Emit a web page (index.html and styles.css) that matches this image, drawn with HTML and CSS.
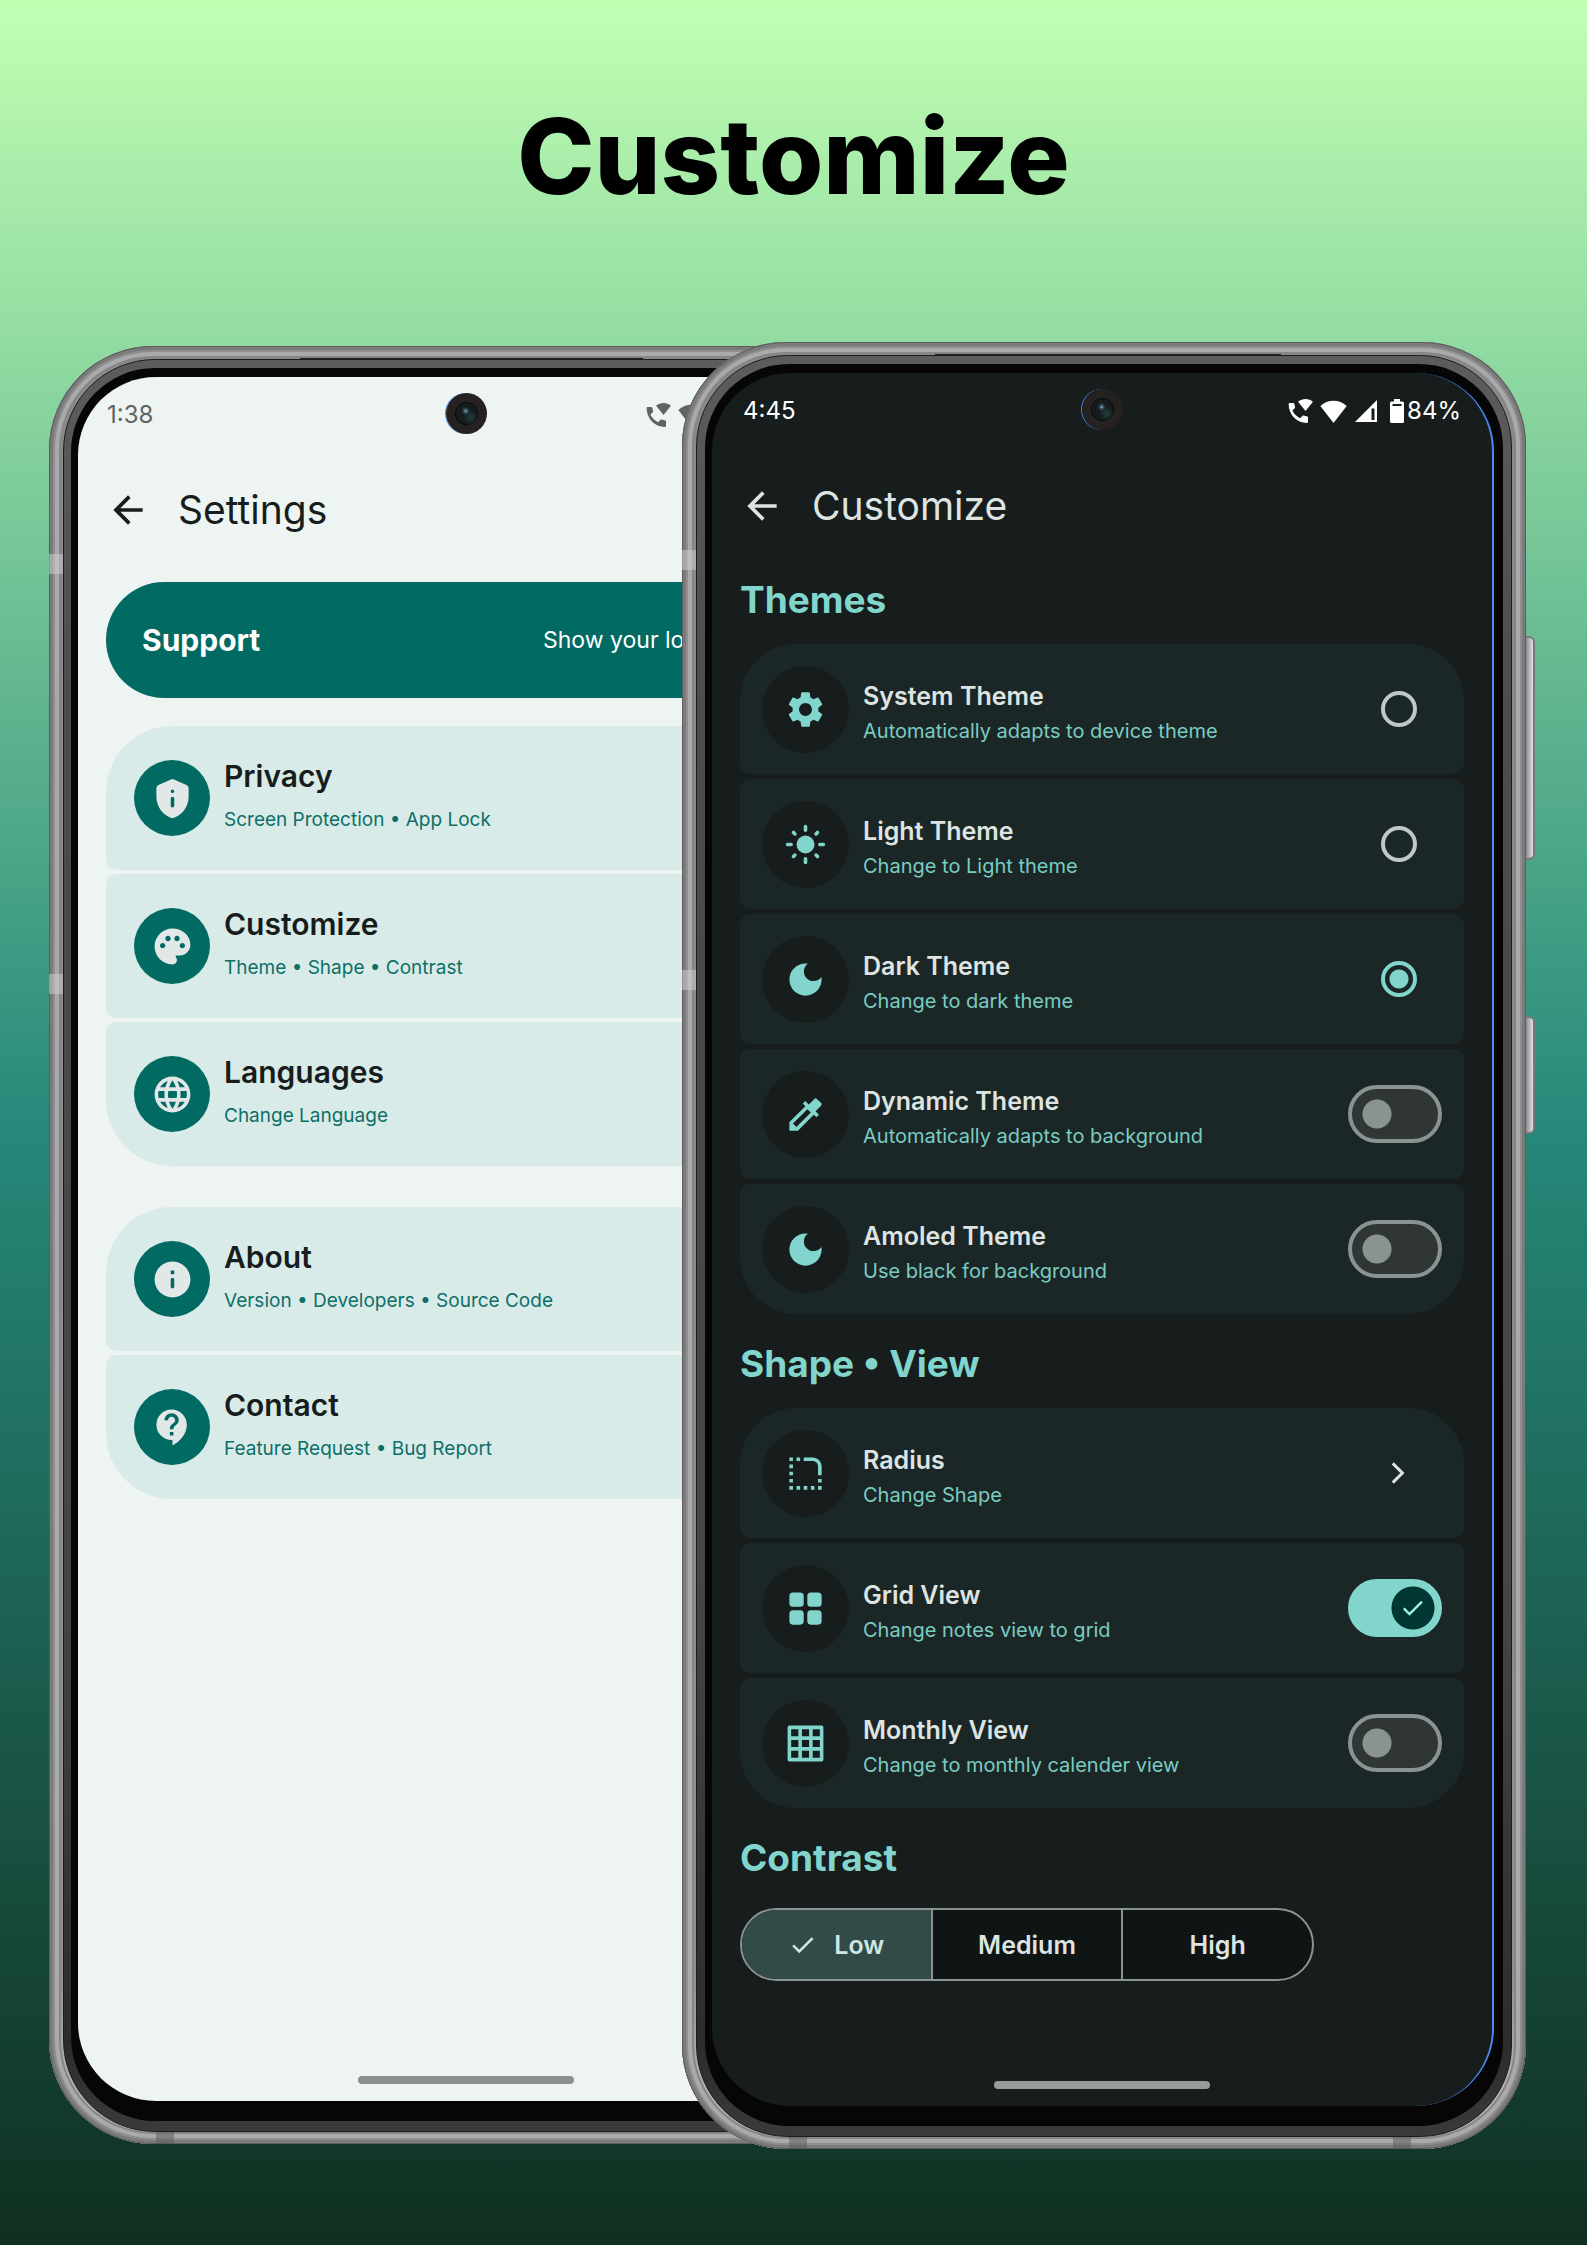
FILE: index.html
```html
<!DOCTYPE html>
<html lang="en">
<head>
<meta charset="utf-8">
<meta name="viewport" content="width=device-width, initial-scale=1">
<title>Customize</title>
<link rel="stylesheet" href="styles.css">
</head>
<body>
<svg class="sprite" aria-hidden="true">
  <symbol id="back" viewBox="0 0 24 24"><path d="M20 11H7.83l5.59-5.59L12 4l-8 8 8 8 1.41-1.41L7.83 13H20v-2z"/></symbol>
  <symbol id="privacy" viewBox="0 0 24 24"><path fill-rule="evenodd" d="M11.2 1.35 4.2 4.45Q3 5 3 6.3V11c0 5.55 3.84 10.74 9 12 5.16-1.26 9-6.45 9-12V6.3Q21 5 19.800 4.450L12.800 1.350Q12 1 11.200 1.350zM12 7a1 1 0 1 1 0 2 1 1 0 0 1 0-2zm0 4c.55 0 1 .45 1 1v4a1 1 0 0 1-2 0v-4c0-.55.45-1 1-1z"/></symbol>
  <symbol id="palette" viewBox="0 0 24 24"><path d="M12 2C6.490 2 2 6.490 2 12s4.490 10 10 10c1.380 0 2.500-1.120 2.500-2.500 0-.610-.230-1.200-.640-1.670-.080-.100-.130-.210-.130-.330 0-.280.220-.500.500-.500H16c3.310 0 6-2.690 6-6 0-4.960-4.490-9-10-9zm-5.500 11c-.830 0-1.500-.670-1.500-1.500S5.670 10 6.500 10 8 10.670 8 11.500 7.330 13 6.500 13zm3-4C8.670 9 8 8.330 8 7.500S8.670 6 9.500 6s1.500.670 1.500 1.500S10.330 9 9.500 9zm5 0c-.830 0-1.500-.670-1.500-1.500S13.670 6 14.500 6s1.500.670 1.500 1.500S15.330 9 14.500 9zm3 4c-.830 0-1.500-.670-1.500-1.500s.670-1.500 1.500-1.500 1.500.670 1.500 1.500-.670 1.500-1.500 1.500z"/></symbol>
  <symbol id="globe" viewBox="0 0 24 24"><path d="M11.99 2C6.47 2 2 6.48 2 12s4.47 10 9.99 10C17.52 22 22 17.52 22 12S17.52 2 11.99 2zm6.93 6h-2.95c-.32-1.25-.78-2.45-1.38-3.56 1.84.63 3.37 1.91 4.33 3.56zM12 4.04c.83 1.2 1.48 2.53 1.91 3.96h-3.82c.43-1.43 1.08-2.76 1.91-3.96zM4.26 14C4.1 13.36 4 12.69 4 12s.1-1.36.26-2h3.38c-.08.66-.14 1.32-.14 2 0 .68.06 1.34.14 2H4.26zm.82 2h2.95c.32 1.25.78 2.45 1.38 3.56-1.84-.63-3.37-1.9-4.33-3.56zm2.95-8H5.08c.96-1.66 2.49-2.93 4.33-3.56C8.81 5.55 8.35 6.75 8.03 8zM12 19.96c-.83-1.2-1.48-2.53-1.91-3.96h3.82c-.43 1.43-1.08 2.76-1.91 3.96zM14.34 14H9.66c-.09-.66-.16-1.32-.16-2 0-.68.07-1.35.16-2h4.68c.09.65.16 1.32.16 2 0 .68-.07 1.34-.16 2zm.25 5.56c.6-1.11 1.06-2.31 1.38-3.56h2.95c-.96 1.65-2.49 2.93-4.33 3.56zM16.36 14c.08-.66.14-1.32.14-2 0-.68-.06-1.34-.14-2h3.38c.16.64.26 1.31.26 2s-.1 1.36-.26 2h-3.38z"/></symbol>
  <symbol id="info" viewBox="0 0 24 24"><path fill-rule="evenodd" d="M12 2C6.480 2 2 6.480 2 12s4.480 10 10 10 10-4.480 10-10S17.520 2 12 2zm0 9c.55 0 1 .45 1 1v4a1 1 0 0 1-2 0v-4c0-.55.45-1 1-1zm1-2h-2V7h2v2z"/></symbol>
  <symbol id="support" viewBox="0 0 24 24"><path d="M11.5 2C6.81 2 3 5.81 3 10.5S6.81 19 11.5 19h.5v3c4.86-2.34 8-7 8-11.5C20 5.81 16.19 2 11.5 2zm1 14.5h-2v-2h2v2zm0-3.5h-2c0-3.25 3-3 3-5 0-1.1-.9-2-2-2s-2 .9-2 2h-2c0-2.21 1.790-4 4-4s4 1.790 4 4c0 2.500-3 2.750-3 5z"/></symbol>
  <symbol id="gear" viewBox="0 0 24 24"><path d="M19.14 12.94c.04-.3.06-.61.06-.94 0-.32-.02-.64-.07-.94l2.03-1.58c.18-.14.23-.41.12-.61l-1.92-3.32c-.12-.22-.37-.29-.59-.22l-2.39.96c-.5-.38-1.03-.7-1.62-.94l-.36-2.54c-.04-.24-.24-.41-.48-.41h-3.84c-.24 0-.43.17-.47.41l-.36 2.54c-.59.24-1.13.57-1.62.94l-2.39-.96c-.22-.08-.47 0-.59.22L2.74 8.87c-.12.21-.08.47.12.61l2.03 1.58c-.05.3-.09.63-.09.94s.02.64.07.94l-2.03 1.58c-.18.14-.23.41-.12.61l1.92 3.32c.12.22.37.29.59.22l2.39-.96c.5.38 1.03.7 1.62.94l.36 2.54c.05.24.24.41.48.41h3.84c.24 0 .44-.17.47-.41l.36-2.54c.59-.24 1.13-.56 1.62-.94l2.39.96c.22.08.47 0 .59-.22l1.92-3.32c.12-.22.07-.47-.12-.61l-2.01-1.58zM12 15.6c-1.98 0-3.6-1.62-3.6-3.6s1.62-3.6 3.6-3.6 3.6 1.62 3.6 3.6-1.62 3.6-3.6 3.6z"/></symbol>
  <symbol id="sun" viewBox="0 0 24 24"><circle cx="12" cy="12" r="5"/><path fill="none" stroke="currentColor" stroke-width="2" stroke-linecap="round" d="M12 2v2M12 20v2M2 12h2M20 12h2M5.300 5.300l.8.8M17.900 17.900l.8.8M5.300 18.700l.8-.8M17.900 6.100l.8-.8"/></symbol>
  <symbol id="moon" viewBox="0 0 24 24"><path d="M12 3c-4.970 0-9 4.030-9 9s4.030 9 9 9 9-4.030 9-9c0-.460-.040-.920-.100-1.360-.980 1.370-2.580 2.260-4.400 2.260-2.980 0-5.400-2.420-5.400-5.400 0-1.810.890-3.420 2.260-4.400-.440-.060-.900-.100-1.360-.100z"/></symbol>
  <symbol id="picker" viewBox="0 0 24 24"><path d="M20.71 5.63l-2.34-2.34c-.39-.39-1.02-.39-1.41 0l-3.12 3.12-1.93-1.91-1.41 1.41 1.42 1.42L3 16.25V21h4.75l8.92-8.92 1.42 1.42 1.41-1.41-1.92-1.92 3.12-3.12c.4-.4.4-1.03.01-1.42zM6.92 19L5 17.08l8.06-8.06 1.92 1.92L6.92 19z"/></symbol>
  <symbol id="radius" viewBox="0 0 24 24"><path d="M19 19h2v2h-2v-2zm0-2h2v-2h-2v2zM3 13h2v-2H3v2zm0 4h2v-2H3v2zm0-8h2V7H3v2zm0-4h2V3H3v2zm4 0h2V3H7v2zm8 16h2v-2h-2v2zm-4 0h2v-2h-2v2zm-4 0h2v-2H7v2zm-4 0h2v-2H3v2zM21 8c0-2.76-2.24-5-5-5h-5v2h5c1.650 0 3 1.350 3 3v5h2V8z"/></symbol>
  <symbol id="grid" viewBox="0 0 24 24"><rect x="3" y="3" width="8" height="8" rx="2"/><rect x="13" y="3" width="8" height="8" rx="2"/><rect x="3" y="13" width="8" height="8" rx="2"/><rect x="13" y="13" width="8" height="8" rx="2"/></symbol>
  <symbol id="month" viewBox="0 0 24 24"><path fill="none" stroke="currentColor" stroke-width="2" stroke-linejoin="round" d="M3 3h18v18H3zM9 3v18M15 3v18M3 9h18M3 15h18"/></symbol>
  <symbol id="chevron" viewBox="0 0 24 24"><path fill="none" stroke="currentColor" stroke-width="1.700" d="M9 6.500l5.500 5.500L9 17.500"/></symbol>
  <symbol id="check" viewBox="0 0 24 24"><path fill="none" stroke="currentColor" stroke-width="2" d="M4.100 12.300L9 17.200 19.700 6.500"/></symbol>
  <symbol id="wificall" viewBox="0 0 24 24"><path d="M.6 5.500C.6 4.800 1 4.500 1.700 4.500h3.100c.6 0 1 .3 1.100.9.100 1 .300 2 .600 2.900.200.500 0 .9-.3 1.200L4 11.500c1.600 3.300 4 5.500 7.200 7.100l2-2.100c.4-.4.800-.5 1.300-.3 1 .3 2 .5 3 .6.600.1 1 .5 1 1.100v4c0 .7-.4 1.100-1.100 1.100C8 23 .6 15.500.6 5.500z"/><path d="M9.300 3.500C13.300.2 19 .2 23 3.500L16.200 12z"/></symbol>
  <symbol id="wifi" viewBox="0 0 26 22"><path d="M13 22 .3 5.800C7.300-1.200 18.700-1.200 25.700 5.800z"/></symbol>
  <symbol id="signal" viewBox="0 0 22 22"><path fill-rule="evenodd" d="M0 22 22 0v22zM16.500 8.500v11.500h3v-11.500z"/></symbol>
  <symbol id="battery" viewBox="0 0 14 24"><path fill-rule="evenodd" d="M4 0h6v2.500h2.500Q14 2.500 14 4v18.500Q14 24 12.500 24h-11Q0 24 0 22.500V4Q0 2.500 1.500 2.500H4zM2.500 5v2h9V5z"/></symbol>
</svg>

<main class="poster">
  <h1 class="poster-title">Customize</h1>
  <div class="stage">

    <section class="phone phone-light" aria-label="Settings screen">
      <span class="band band-upper"></span><span class="band band-lower"></span>
      <span class="band band-foot-start"></span><span class="band band-foot-end"></span>
      <span class="speaker"></span>
      <div class="rim"><div class="bezel"><div class="screen">
        <div class="status">
          <time class="clock">1:38</time>
          <span class="camera"></span>
          <div class="status-icons">
            <svg class="s-call"><use href="#wificall"/></svg>
            <svg class="s-wifi"><use href="#wifi"/></svg>
            <svg class="s-signal"><use href="#signal"/></svg>
            <svg class="s-battery"><use href="#battery"/></svg>
          </div>
        </div>
        <header class="bar">
          <button class="back" aria-label="Back"><svg><use href="#back"/></svg></button>
          <h2 class="bar-title">Settings</h2>
        </header>
        <a class="support" href="#support"><strong class="support-name">Support</strong><span class="support-note">Show your love</span></a>
        <nav class="list">
          <a class="card" href="#privacy"><span class="badge"><svg><use href="#privacy"/></svg></span><span class="text"><b class="name">Privacy</b><span class="note">Screen Protection • App Lock</span></span></a>
          <a class="card" href="#palette"><span class="badge"><svg><use href="#palette"/></svg></span><span class="text"><b class="name">Customize</b><span class="note">Theme • Shape • Contrast</span></span></a>
          <a class="card" href="#globe"><span class="badge"><svg><use href="#globe"/></svg></span><span class="text"><b class="name">Languages</b><span class="note">Change Language</span></span></a>
        </nav>
        <nav class="list">
          <a class="card" href="#info"><span class="badge"><svg><use href="#info"/></svg></span><span class="text"><b class="name">About</b><span class="note">Version • Developers • Source Code</span></span></a>
          <a class="card" href="#support"><span class="badge"><svg><use href="#support"/></svg></span><span class="text"><b class="name">Contact</b><span class="note">Feature Request • Bug Report</span></span></a>
        </nav>
        <span class="home"></span>
      </div></div></div>
    </section>

    <section class="phone phone-dark" aria-label="Customize screen">
      <span class="band band-upper"></span><span class="band band-lower"></span>
      <span class="band band-foot-start"></span><span class="band band-foot-end"></span>
      <span class="speaker"></span>
      <span class="key key-volume"></span><span class="key key-power"></span>
      <div class="rim"><div class="bezel"><div class="screen">
        <div class="status">
          <time class="clock">4:45</time>
          <span class="camera"></span>
          <div class="status-icons">
            <svg class="s-call"><use href="#wificall"/></svg>
            <svg class="s-wifi"><use href="#wifi"/></svg>
            <svg class="s-signal"><use href="#signal"/></svg>
            <svg class="s-battery"><use href="#battery"/></svg>
            <span>84%</span>
          </div>
        </div>
        <header class="bar">
          <button class="back" aria-label="Back"><svg><use href="#back"/></svg></button>
          <h2 class="bar-title">Customize</h2>
        </header>

        <h3 class="heading">Themes</h3>
        <div class="list">
          <label class="card"><span class="badge"><svg><use href="#gear"/></svg></span><span class="text"><b class="name">System Theme</b><span class="note">Automatically adapts to device theme</span></span><input class="radio" type="radio" name="theme"></label>
          <label class="card"><span class="badge"><svg><use href="#sun"/></svg></span><span class="text"><b class="name">Light Theme</b><span class="note">Change to Light theme</span></span><input class="radio" type="radio" name="theme"></label>
          <label class="card"><span class="badge"><svg><use href="#moon"/></svg></span><span class="text"><b class="name">Dark Theme</b><span class="note">Change to dark theme</span></span><input class="radio" type="radio" name="theme" checked></label>
          <label class="card"><span class="badge"><svg><use href="#picker"/></svg></span><span class="text"><b class="name">Dynamic Theme</b><span class="note">Automatically adapts to background</span></span><span class="switch"><input type="checkbox"><svg><use href="#check"/></svg></span></label>
          <label class="card"><span class="badge"><svg><use href="#moon"/></svg></span><span class="text"><b class="name">Amoled Theme</b><span class="note">Use black for background</span></span><span class="switch"><input type="checkbox"><svg><use href="#check"/></svg></span></label>
        </div>

        <h3 class="heading">Shape • View</h3>
        <div class="list">
          <a class="card" href="#radius"><span class="badge"><svg><use href="#radius"/></svg></span><span class="text"><b class="name">Radius</b><span class="note">Change Shape</span></span><svg class="chevron"><use href="#chevron"/></svg></a>
          <label class="card"><span class="badge"><svg><use href="#grid"/></svg></span><span class="text"><b class="name">Grid View</b><span class="note">Change notes view to grid</span></span><span class="switch"><input type="checkbox" checked><svg><use href="#check"/></svg></span></label>
          <label class="card"><span class="badge"><svg><use href="#month"/></svg></span><span class="text"><b class="name">Monthly View</b><span class="note">Change to monthly calender view</span></span><span class="switch"><input type="checkbox"><svg><use href="#check"/></svg></span></label>
        </div>

        <h3 class="heading">Contrast</h3>
        <div class="segments" role="radiogroup" aria-label="Contrast">
          <label class="segment"><input type="radio" name="contrast" checked><svg><use href="#check"/></svg>Low</label>
          <label class="segment"><input type="radio" name="contrast"><svg><use href="#check"/></svg>Medium</label>
          <label class="segment"><input type="radio" name="contrast"><svg><use href="#check"/></svg>High</label>
        </div>
        <span class="home"></span>
      </div></div></div>
    </section>

  </div>
</main>
</body>
</html>
```

FILE: styles.css
```css
* { box-sizing: border-box; }

body {
  margin: 0;
  font-family: Inter, "Noto Sans", sans-serif;
}

.sprite { position: absolute; width: 0; height: 0; }
svg { display: block; flex: none; fill: currentColor; }
h1, h2, h3 { margin: 0; }
a { color: inherit; text-decoration: none; }

.poster {
  min-height: 100vh;
  padding-bottom: 97px;
  background: linear-gradient(#c1ffb3, #26897a 50%, #102f20);
}

.poster-title {
  padding: 91px 0 121px;
  font-size: 104px;
  line-height: 130px;
  font-weight: 800;
  text-align: center;
  color: #000;
}

.stage {
  display: grid;
  grid-template-columns: 49fr 633fr 204fr 640fr 61fr;
}

/* Handset: metal frame > dark rim > black bezel > screen */
.phone {
  position: relative;
  grid-row: 1;
  display: flex;
  min-width: 0;
  padding: 13px 14px 12px;
  border-radius: 104px;
  background: linear-gradient(#8a8a8a, #8e8e8e 90%, #b5b5b5 97%);
  box-shadow:
    inset 0 0 0 1px #5c5c5c,
    inset 0 0 0 4px #7b7b7b,
    inset 0 0 0 6px #8f8f8f,
    inset 0 0 0 10px #aaaaac,
    inset 0 0 0 12px #868688;
}
.phone-light { grid-column: 2 / 4; margin: 4px 0 5px; }
.phone-dark { grid-column: 3 / 5; }

.rim {
  display: flex;
  flex: 1;
  min-width: 0;
  padding: 8px 8px 10px;
  border: 1px solid #1c1c1c;
  border-radius: 92px;
  background: linear-gradient(#5c5c5c, #4c4c4c 20%, #454545 70%, #2c2c2c 95%, #3a3a3a);
}
.bezel {
  display: flex;
  flex: 1;
  min-width: 0;
  padding: 9px 9px 20px 7px;
  border-radius: 84px;
  background: #060606;
}
.screen {
  display: flex;
  flex-direction: column;
  flex: 1;
  min-width: 0;
  padding: 0 28px 17px;
  border-radius: 78px;
}

.speaker {
  position: absolute;
  top: 12px;
  left: 30%;
  right: 29%;
  height: 2px;
  background: #1c2020;
}
.band { position: absolute; background: rgba(210, 210, 210, 0.5); }
.band-upper, .band-lower { left: 0; width: 14px; height: 20px; }
.band-upper { top: 208px; }
.band-lower { top: 628px; }
.band-foot-start, .band-foot-end { bottom: 0; width: 18px; height: 12px; background: rgba(90, 90, 90, 0.5); }
.band-foot-start { left: 107px; }
.band-foot-end { right: 115px; }
.key {
  position: absolute;
  left: 100%;
  width: 9px;
  border: solid #77777b;
  border-width: 2px 2px 2px 0;
  border-radius: 0 6px 6px 0;
  background: linear-gradient(90deg, #8a8a90, #b6b5bb 50%, #e2e2e4);
}
.key-volume { top: 294px; height: 224px; }
.key-power { top: 674px; height: 118px; }

/* Status bar */
.status {
  position: relative;
  display: flex;
  align-items: center;
  justify-content: space-between;
  height: 78px;
  padding: 0 3px 2px;
  font-size: 24px;
  line-height: 28px;
}
.camera {
  position: absolute;
  top: 16px;
  left: 50%;
  width: 41px;
  height: 41px;
  margin-left: -20px;
  border-radius: 50%;
  background:
    radial-gradient(circle at 48% 44%, #8fc3d4, #34596a 5%, rgba(29, 46, 48, 0) 13%),
    radial-gradient(circle at 60% 60%, #24403c, rgba(26, 35, 35, 0) 20%),
    radial-gradient(circle, #161c1e 34%, #0a0c0c 38%, #262221 42%, #221f1e);
  box-shadow: -1px 0 0 #4a8af0;
}
.status-icons { display: flex; align-items: center; }
.s-call { width: 26px; height: 26px; margin-right: 6px; }
.s-wifi { width: 27px; height: 23px; margin-right: 8px; }
.s-signal { width: 22px; height: 22px; margin-right: 13px; }
.s-battery { width: 14px; height: 24px; margin-right: 3px; }

/* App bar */
.bar {
  display: flex;
  align-items: center;
  gap: 28px;
  height: 90px;
  margin-top: 10px;
}
.back {
  display: block;
  padding: 0;
  border: 0;
  background: none;
  color: inherit;
}
.back svg { width: 44px; height: 44px; }
.bar-title { font-size: 39px; line-height: 46px; font-weight: 400; }

/* Rows */
.list { display: flex; flex-direction: column; }
.card {
  display: flex;
  align-items: center;
  border-radius: 10px;
}
.badge {
  display: flex;
  align-items: center;
  justify-content: center;
  flex: none;
  border-radius: 50%;
}
.text { display: flex; flex-direction: column; flex: 1; min-width: 0; white-space: nowrap; }
.name { font-weight: 600; }

.home {
  align-self: center;
  width: 216px;
  height: 8px;
  margin-top: auto;
  border-radius: 4px;
}

/* Settings, light */
.phone-light .rim { padding-left: 7px; }
.phone-light .screen { background: #eef4f2; color: #161d1c; }
.phone-light .clock, .phone-light .status-icons { color: #5f6463; }
.phone-light .status { padding-left: 1px; }
.phone-light .status-icons { padding-right: 58px; }
.phone-light .support { margin-top: 27px; }
.support {
  display: flex;
  align-items: center;
  justify-content: space-between;
  height: 116px;
  padding: 0 36px;
  border-radius: 58px;
  background: #006a63;
  color: #fff;
}
.support-name { font-size: 30px; line-height: 36px; }
.support-note { width: 247px; font-size: 23px; line-height: 28px; white-space: nowrap; }
.phone-light .list { gap: 4px; margin-top: 28px; }
.phone-light .list + .list { margin-top: 41px; }
.phone-light .card { gap: 14px; height: 144px; padding: 0 28px; background: #d9ebe8; }
.phone-light .card:first-child { border-top-left-radius: 66px; border-top-right-radius: 66px; }
.phone-light .card:last-child { border-bottom-left-radius: 66px; border-bottom-right-radius: 66px; }
.phone-light .badge { width: 76px; height: 76px; background: #006a63; color: #e2e8e7; }
.phone-light .badge svg { width: 43px; height: 43px; }
.phone-light .name { font-size: 30px; line-height: 44px; }
.phone-light .note { font-size: 19px; line-height: 44px; color: #0d6f68; }
.phone-light .home { background: #8d8f8e; }

/* Customize, dark */
.phone-dark .screen { border-right: 2px solid #4a8af0; background: #171d1c; color: #dde4e2; }
.phone-dark .status { color: #fff; }
.heading {
  margin: 27px 0 22px;
  font-size: 37px;
  line-height: 44px;
  font-weight: 700;
  color: #81d5cc;
}
.list + .heading { margin-top: 28px; }
.phone-dark .list { gap: 5px; }
.phone-dark .card { gap: 14px; height: 130px; padding: 0 22px; background: #1b2726; }
.phone-dark .card:first-child { border-top-left-radius: 56px; border-top-right-radius: 56px; }
.phone-dark .card:last-child { border-bottom-left-radius: 56px; border-bottom-right-radius: 56px; }
.phone-dark .badge { width: 87px; height: 87px; background: #171d1c; color: #81d5cc; }
.phone-dark .badge svg { width: 43px; height: 43px; }
.phone-dark .text { padding-top: 8px; }
.phone-dark .name { font-size: 25px; line-height: 36px; }
.phone-dark .note { font-size: 20px; line-height: 34px; color: #7accc3; }

.radio {
  appearance: none;
  flex: none;
  width: 36px;
  height: 36px;
  margin: 0 25px 0 0;
  border: 4px solid #bec9c7;
  border-radius: 50%;
}
.radio:checked { border-color: #81d5cc; background: radial-gradient(circle, #81d5cc 9px, transparent 10px); }

.chevron { width: 42px; height: 42px; margin-right: 23px; }

.switch { display: grid; flex: none; align-items: center; }
.switch input, .switch svg { grid-area: 1 / 1; }
.switch input {
  appearance: none;
  width: 94px;
  height: 58px;
  margin: 0;
  border: 4px solid #899391;
  border-radius: 29px;
  background: radial-gradient(circle at 25px 25px, #899391 14px, transparent 15px) #303635;
}
.switch svg { visibility: hidden; justify-self: end; width: 28px; height: 28px; margin-right: 15px; color: #a0f2e8; }
.switch input:checked {
  border-color: #81d5cc;
  background: radial-gradient(circle at 61px 25px, #003733 21px, transparent 22px) #81d5cc;
}
.switch input:checked + svg { visibility: visible; }

.segments {
  display: flex;
  align-self: flex-start;
  width: 574px;
  max-width: 100%;
  height: 73px;
  margin: 6px 0 100px;
  overflow: hidden;
  border: 2px solid #899391;
  border-radius: 37px;
  background: #0e1514;
}
.segment {
  display: flex;
  align-items: center;
  justify-content: center;
  gap: 16px;
  flex: 1;
  font-size: 25px;
  font-weight: 600;
}
.segment + .segment { border-left: 2px solid #899391; }
.segment input { position: absolute; appearance: none; margin: 0; }
.segment svg { display: none; width: 30px; height: 30px; }
.segment:has(:checked) { background: #324b48; color: #cce8e4; }
.segment input:checked + svg { display: block; }
.phone-dark .home { background: #979b9b; }
```
